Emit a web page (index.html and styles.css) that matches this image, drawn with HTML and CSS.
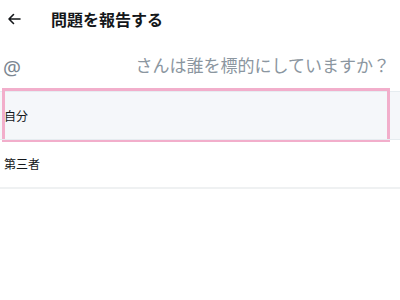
FILE: index.html
```html
<!DOCTYPE html>
<html lang="ja">
<head>
<meta charset="utf-8">
<link rel="stylesheet" href="styles.css">
</head>
<body>
<div class="page">
  <header class="header">
    <span class="back">
      <svg width="14" height="12" viewBox="0 0 14 12"><path d="M13 6H2M6.5 1.5L2 6l4.5 4.5" fill="none" stroke="#14171a" stroke-width="1.6" stroke-linecap="round" stroke-linejoin="round"/></svg>
    </span>
    <h1 class="title">問題を報告する</h1>
  </header>
  <div class="search">
    <span class="at">@</span>
    <span class="placeholder">さんは誰を標的にしていますか？</span>
  </div>
  <ul class="options">
    <li class="option selected">自分</li>
    <li class="option">第三者</li>
  </ul>
</div>
</body>
</html>
```
FILE: styles.css
```css
*, *::before, *::after { box-sizing: border-box; }
html, body { margin: 0; padding: 0; background: #fff; }
body {
  font-family: "Noto Sans CJK JP", "Noto Sans", sans-serif;
  color: #14171a;
  width: 400px;
  height: 300px;
  overflow: hidden;
}
.header {
  display: flex;
  align-items: center;
  height: 38px;
  padding-left: 7px;
}
.back {
  display: flex;
  width: 44px;
  align-items: center;
}
.title {
  margin: 0;
  font-size: 16px;
  font-weight: 700;
  line-height: 20px;
}
.search {
  display: flex;
  align-items: center;
  justify-content: space-between;
  height: 53px;
  padding: 0 10px 0 3px;
}
.at {
  font-family: "Noto Sans", sans-serif;
  font-size: 20px;
  color: #7b8691;
  line-height: 24px;
  margin-top: 6px;
}
.placeholder {
  font-size: 17px;
  color: #8b96a0;
  line-height: 22px;
  margin-top: 1px;
}
.options {
  list-style: none;
  margin: 0;
  padding: 0;
}
.option {
  position: relative;
  display: flex;
  align-items: center;
  height: 49px;
  padding-left: 4px;
  font-size: 12px;
  border-top: 1px solid #e6ecf0;
}
.option:last-child {
  border-bottom: 2px solid #eff1f2;
  height: 50px;
}
.selected {
  background: #f5f7fa;
  height: 48px;
}
.selected::after {
  content: "";
  position: absolute;
  left: 2px;
  top: -4px;
  width: 388px;
  height: 54px;
  border: 3px solid #f2aecb;
}
```
